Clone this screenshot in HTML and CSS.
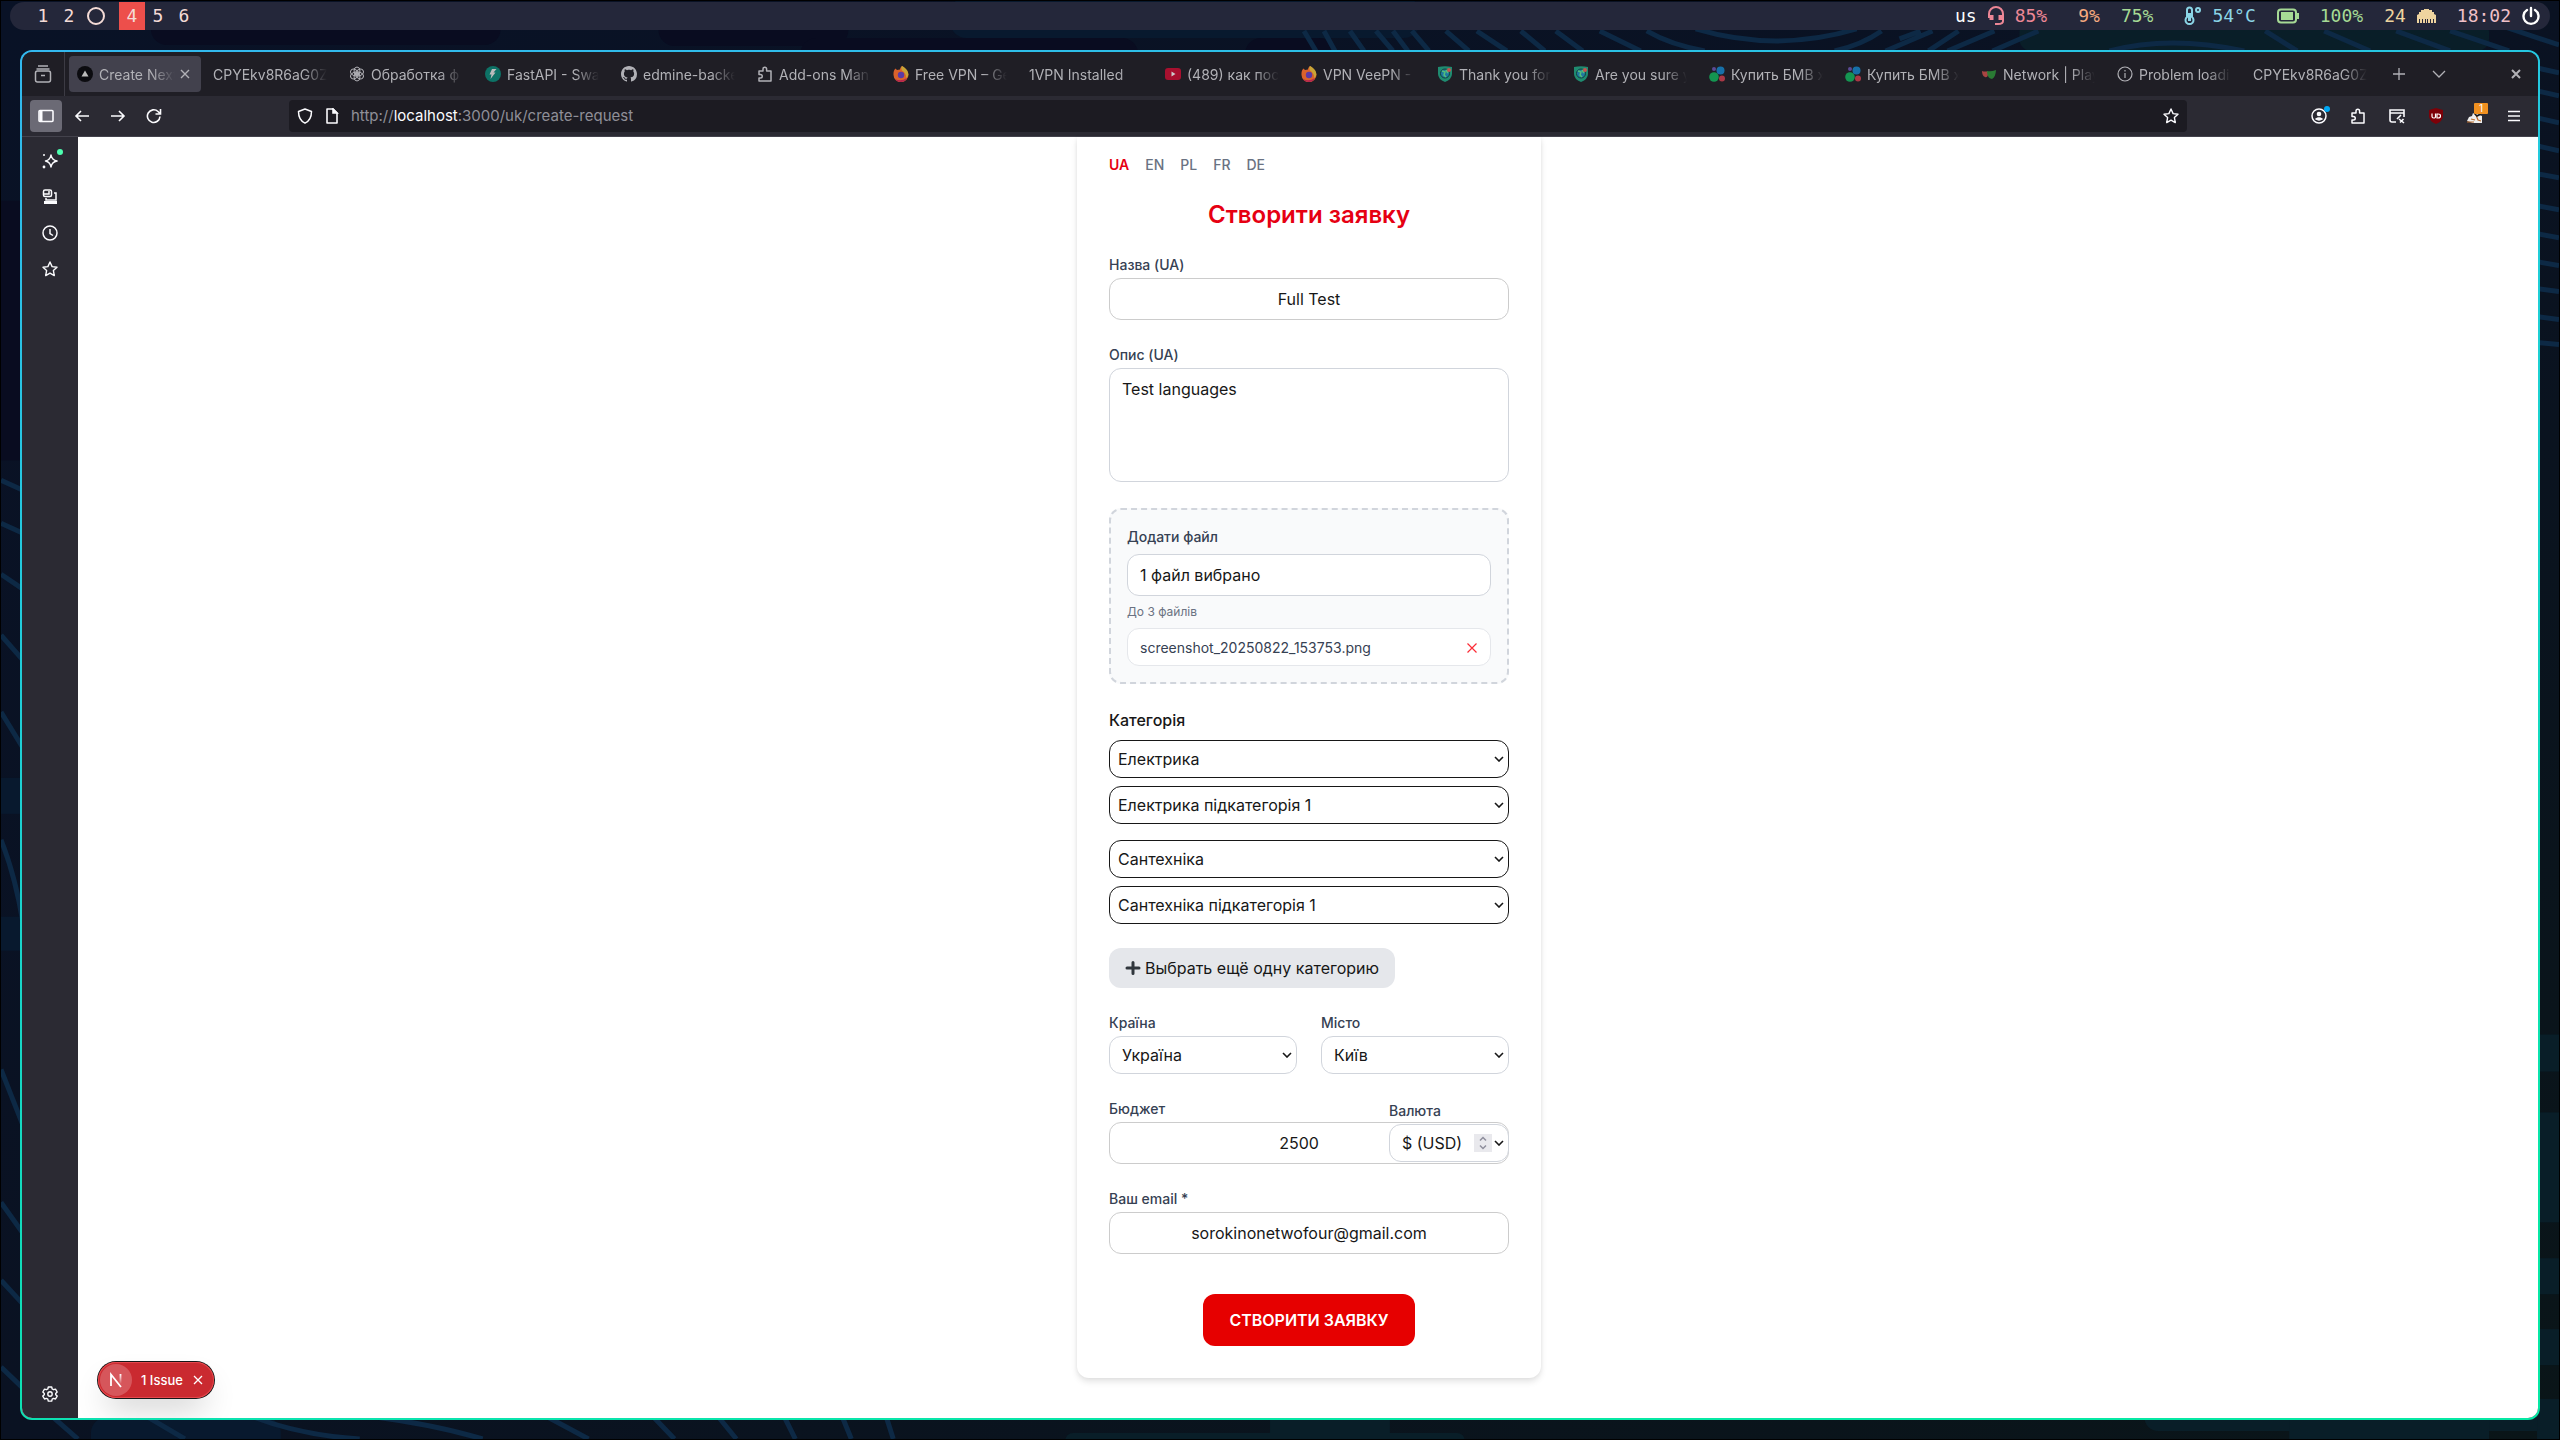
FILE: index.html
```html
<!DOCTYPE html>
<html lang="uk">
<head>
<meta charset="utf-8">
<title>Створити заявку</title>
<link rel="stylesheet" href="styles.css">
</head>
<body>
<svg class="wallpaper" viewBox="0 0 2560 1440" preserveAspectRatio="none" aria-hidden="true">
  <defs>
    <linearGradient id="night" x1="0" y1="0" x2="1" y2="1"><stop offset="0" stop-color="#091226"/><stop offset=".5" stop-color="#0a1222"/><stop offset="1" stop-color="#0a1518"/></linearGradient>
  </defs>
  <rect width="2560" height="1440" fill="url(#night)"/>
  <g fill="#090c20">
    <rect x="0" y="200" width="22" height="260"/>
    <rect x="150" y="10" width="350" height="34" rx="16"/>
    <rect x="658" y="10" width="190" height="35" rx="16"/>
    <rect x="800" y="37" width="338" height="40" rx="16"/>
    <rect x="1245" y="37" width="90" height="40" rx="16"/>
  </g>
  <g fill="#08192e">
    <rect x="950" y="-4" width="470" height="41" rx="16"/>
    <rect x="0" y="778" width="22" height="36"/>
    <rect x="0" y="917" width="22" height="34"/>
    <rect x="90" y="1418" width="190" height="40" rx="16"/>
  </g>
  <g fill="#091e28">
    <rect x="2020" y="20" width="470" height="30" rx="12"/>
    <rect x="1270" y="1400" width="120" height="50"/>
    <rect x="1065" y="1434" width="400" height="20" rx="8"/>
    <rect x="2145" y="1400" width="440" height="32" rx="14"/>
    <rect x="2290" y="1420" width="200" height="40"/>
    <rect x="2538" y="1035" width="22" height="37"/>
    <rect x="2538" y="1113" width="22" height="110"/>
    <rect x="2538" y="1259" width="22" height="36"/>
    <rect x="2538" y="1330" width="22" height="36"/>
    <rect x="2538" y="1400" width="22" height="40"/>
  </g>
  <g fill="none" stroke="#0d2945" stroke-width="5">
    <path d="M1304 30l12 20M1324 30l11 20M1350 30l14 20M1376 30l17 20M1393 30l15 20M1412 30l17 20M1446 30l23 20M1477 30l30 20M1521 30l24 20M1556 30l27 20M1600 30l41 20M1647 30q24 14 58 20M1696 28q81 24 161 0M1882 30q-20 14-47 20M1933 30l-47 20M1921 30l-21 8M1959 30l-30 20M1995 30l-47 20M2039 30l-46 20M2110 50q60-16 135 0M2266 30l32 20M2325 30l46 20M2397 30l54 20M2451 30l59 20"/>
    <path d="M2500 24l60 20M2538 67l22 5M2538 90l22 5M2538 117l22 5M2538 145l22 5M2538 173l22 4M2538 205l22 4M2538 233l22 4M2538 261l22 4M2538 288l22 3M2538 316l22 3M2538 342l22 2"/>
    <path d="M0 480l22 10M0 523l22 10M0 574l22 15M0 635l22 25M0 712l22 36M0 840q14 35 22 83M0 1070l22 56M0 1203l22 31M0 1281l22 24M0 1368l22 21"/>
    <path d="M52 1418l25 22M147 1418l37 22M253 1418q46 18 106 22M375 1418q60 8 107 22M547 1418l41 22M653 1418l21 22M718 1418l18 22M784 1418l11 22M842 1418l9 22M886 1418l7 22"/>
  </g>
</svg>

<header class="status">
  <nav class="spaces" aria-label="Workspaces">
    <button class="space">1</button><button class="space">2</button>
    <button class="space space-ring" aria-label="3"><svg width="20" height="20" viewBox="0 0 20 20" fill="none" stroke="currentColor" stroke-width="2"><circle cx="10" cy="10" r="8"/></svg></button>
    <button class="space space-on">4</button><button class="space">5</button><button class="space">6</button>
  </nav>
  <div class="meters">
    <span class="white">us</span>
    <span class="rose g1"><svg width="16" height="20" viewBox="0 0 16 20" fill="none" stroke="currentColor" stroke-width="2"><path d="M1 12V8a7 7 0 0 1 14 0v7q0 3-5 3H7"/><path d="M3.500 9v5M12.500 9v5" stroke-width="4"/></svg></span>
    <span class="rose g1">85%</span>
    <span class="peach g3">9%</span>
    <span class="green g2">75%</span>
    <span class="sky g3"><svg width="17" height="20" viewBox="0 0 17 20" fill="none" stroke="currentColor" stroke-width="2"><path d="M3 11V4a2.500 2.500 0 0 1 5 0v7a4 4 0 1 1-5 0z"/><path d="M5.500 7v8" stroke-width="3"/><circle cx="14" cy="4" r="2"/></svg></span>
    <span class="sky g1">54°C</span>
    <span class="green g2"><svg width="22" height="16" viewBox="0 0 22 16" fill="none" stroke="currentColor" stroke-width="2"><rect x="1" y="1.500" width="18" height="13" rx="3"/><path d="M5 5h10v6H5z" fill="currentColor"/><path d="M21 5v6"/></svg></span>
    <span class="green g2">100%</span>
    <span class="sand g2">24</span>
    <span class="sand g1"><svg width="19" height="16" viewBox="0 0 19 16" fill="currentColor"><path d="M0 15V7l2-1V4h2V2h3V1h5v1h3v2h2v2l2 1v8h-2v-4h-1v4h-2v-4h-1v4h-2v-4h-1v4H9v-4H8v4H6v-4H5v4H3v-4H2v4z"/></svg></span>
    <span class="pink g2">18:02</span>
    <button class="white g1 power" aria-label="Power"><svg width="18" height="20" viewBox="0 0 18 20" fill="none" stroke="currentColor" stroke-width="2.400" stroke-linecap="round"><path d="M5 4a7.500 7.500 0 1 0 8 0M9 2v8"/></svg></button>
  </div>
</header>

<svg class="defs" aria-hidden="true">
  <symbol id="firefox" viewBox="0 0 16 16"><path d="M9 0c3 2 6 5 6.500 8.500A7.500 7.500 0 0 1 .5 9C.3 6 1 4 2.500 2.500L4 4l3-.5C7 2 8 1 9 0z" fill="#d9622b"/><path d="M9 0c4 2 6.500 5 6.300 8.500-.3 2-1.300 3-2.300 3.500.5-3-1-5.500-4-7.500C8 3 8 1 9 0z" fill="#c9a436"/><path d="M2 13q6 3 12-1-2 4-6 4t-6-3z" fill="#b5254f"/><circle cx="8" cy="9" r="3.200" fill="#5b3aa5"/></symbol>
  <symbol id="shieldglobe" viewBox="0 0 16 16"><path d="M1 1q7-1.500 14 0v7q0 5-7 8-7-3-7-8z" fill="#1f8b70"/><circle cx="8" cy="7.500" r="4.500" fill="#2079a0" stroke="#12403c"/><path d="M5 5l3 1-1 3 2 2M9 4l2 3" stroke="#53c07a" stroke-width="1.500" fill="none"/><circle cx="12" cy="4" r="2" fill="#c65450"/></symbol>
  <symbol id="dots" viewBox="0 0 16 16"><circle cx="5" cy="11" r="4.800" fill="#149551"/><circle cx="11.500" cy="4.500" r="4" fill="#1670a8"/><circle cx="13" cy="12.500" r="3" fill="#a93845"/><circle cx="5" cy="3" r="2" fill="#5b4a94"/></symbol>
  <symbol id="puzzle" viewBox="0 0 16 16"><path d="M2 6.500V5h4V3a1.800 1.800 0 0 1 3.600 0v2H14v10H2v-3h1.500a1.700 1.700 0 0 0 0-3.500H2z" fill="none" stroke="currentColor" stroke-width="1.500" stroke-linejoin="round"/></symbol>
  <symbol id="star" viewBox="0 0 16 16"><path d="M8 1l2.100 4.600 4.900.6-3.600 3.400.9 5L8 12.100 3.700 14.600l.9-5L1 6.200l4.900-.6z" fill="none" stroke="currentColor" stroke-width="1.400" stroke-linejoin="round"/></symbol>
</svg>

<div class="window">
  <div class="tabbar">
    <button class="view" aria-label="Firefox View"><svg width="18" height="18" viewBox="0 0 18 18" fill="none" stroke="currentColor" stroke-width="1.500"><path d="M4 1h10M2.500 4h13"/><rect x="1.500" y="6" width="15" height="11" rx="2"/><path d="M7 10.500h4"/></svg></button>
    <div class="tabs">
      <div class="tab tab-on"><svg width="16" height="16" viewBox="0 0 16 16"><circle cx="8" cy="8" r="8" fill="#0c0c10"/><path d="M8 4.500l3.500 6h-7z" fill="#bbb"/></svg><span class="tab-title">Create Next</span><button class="tab-close" aria-label="Close tab"><svg width="10" height="10" viewBox="0 0 10 10" stroke="currentColor" stroke-width="1.400"><path d="M1 1l8 8M9 1l-8 8"/></svg></button></div>
      <div class="tab"><span class="tab-title">CPYEkv8R6aG0Z</span></div>
      <div class="tab"><svg width="16" height="16" viewBox="0 0 16 16" fill="none" stroke="currentColor" stroke-width="1"><ellipse cx="8" cy="5" rx="3" ry="4"/><ellipse cx="8" cy="5" rx="3" ry="4" transform="rotate(60 8 8)"/><ellipse cx="8" cy="5" rx="3" ry="4" transform="rotate(120 8 8)"/><ellipse cx="8" cy="5" rx="3" ry="4" transform="rotate(180 8 8)"/><ellipse cx="8" cy="5" rx="3" ry="4" transform="rotate(240 8 8)"/><ellipse cx="8" cy="5" rx="3" ry="4" transform="rotate(300 8 8)"/></svg><span class="tab-title">Обработка ф</span></div>
      <div class="tab"><svg width="16" height="16" viewBox="0 0 16 16"><circle cx="8" cy="8" r="8" fill="#0d7266"/><path d="M7 3h4.500l-3 3.500h2L5.500 13 6.500 8.500h-2z" fill="#bbb"/></svg><span class="tab-title">FastAPI - Swa</span></div>
      <div class="tab"><svg width="16" height="16" viewBox="0 0 16 16" fill="currentColor"><path d="M8 0C3.580 0 0 3.580 0 8c0 3.540 2.290 6.530 5.470 7.590.4.070.55-.17.55-.38 0-.19-.01-.82-.01-1.490-2.010.37-2.530-.49-2.690-.94-.09-.23-.48-.94-.82-1.130-.28-.15-.68-.52-.01-.53.63-.01 1.080.58 1.230.82.72 1.210 1.870.87 2.330.66.07-.52.28-.87.51-1.070-1.780-.2-3.640-.89-3.640-3.950 0-.87.31-1.590.82-2.150-.08-.2-.36-1.020.08-2.120 0 0 .67-.21 2.200.82.64-.18 1.320-.27 2-.27s1.360.09 2 .27c1.530-1.040 2.200-.82 2.200-.82.44 1.100.16 1.920.08 2.120.51.56.82 1.270.82 2.150 0 3.070-1.870 3.750-3.650 3.950.29.25.54.73.54 1.480 0 1.070-.01 1.930-.01 2.200 0 .21.15.46.55.38A8.010 8.010 0 0 0 16 8c0-4.420-3.580-8-8-8z"/></svg><span class="tab-title">edmine-backe</span></div>
      <div class="tab"><svg width="16" height="16"><use href="#puzzle"/></svg><span class="tab-title">Add-ons Man</span></div>
      <div class="tab"><svg width="16" height="16"><use href="#firefox"/></svg><span class="tab-title">Free VPN – Ge</span></div>
      <div class="tab"><span class="tab-title">1VPN Installed</span></div>
      <div class="tab"><svg width="16" height="16" viewBox="0 0 16 16"><rect y="2" width="16" height="12" rx="3" fill="#a8102f"/><path d="M6.500 5.500l4 2.500-4 2.500z" fill="#ccc"/></svg><span class="tab-title">(489) как пос</span></div>
      <div class="tab"><svg width="16" height="16"><use href="#firefox"/></svg><span class="tab-title">VPN VeePN -</span></div>
      <div class="tab"><svg width="16" height="16"><use href="#shieldglobe"/></svg><span class="tab-title">Thank you for</span></div>
      <div class="tab"><svg width="16" height="16"><use href="#shieldglobe"/></svg><span class="tab-title">Are you sure y</span></div>
      <div class="tab"><svg width="16" height="16"><use href="#dots"/></svg><span class="tab-title">Купить БМВ х</span></div>
      <div class="tab"><svg width="16" height="16"><use href="#dots"/></svg><span class="tab-title">Купить БМВ х</span></div>
      <div class="tab"><svg width="16" height="16" viewBox="0 0 16 16"><path d="M1 5q3 1 6 0v4q-1 3-3 2Q1 10 1 5z" fill="#a84442"/><path d="M6 5q4 1 9-1-.3 7-4 9Q6 12 6 5z" fill="#2a7a34"/></svg><span class="tab-title">Network | Play</span></div>
      <div class="tab"><svg width="16" height="16" viewBox="0 0 16 16" fill="none" stroke="currentColor" stroke-width="1.200"><circle cx="8" cy="8" r="7"/><path d="M8 7v5M8 4v1.500"/></svg><span class="tab-title">Problem loadi</span></div>
      <div class="tab"><span class="tab-title">CPYEkv8R6aG0Z</span></div>
    </div>
    <button class="strip" aria-label="New tab"><svg width="14" height="14" viewBox="0 0 14 14" stroke="currentColor" stroke-width="1.300"><path d="M7 1v12M1 7h12"/></svg></button>
    <button class="strip" aria-label="List tabs"><svg width="14" height="14" viewBox="0 0 14 14" fill="none" stroke="currentColor" stroke-width="1.300"><path d="M1 4l6 6 6-6"/></svg></button>
    <button class="strip strip-close" aria-label="Close window"><svg width="10" height="10" viewBox="0 0 10 10" stroke="currentColor" stroke-width="2"><path d="M1 1l8 8M9 1l-8 8"/></svg></button>
  </div>

  <div class="toolbar">
    <button class="tool tool-on" aria-label="Sidebar"><svg width="16" height="16" viewBox="0 0 16 16" fill="none" stroke="currentColor" stroke-width="1.600"><rect x="1" y="2.500" width="14" height="11" rx="1"/><path d="M3 3v10" stroke-width="3"/></svg></button>
    <button class="tool" aria-label="Back"><svg width="16" height="16" viewBox="0 0 16 16" fill="none" stroke="currentColor" stroke-width="1.600"><path d="M15 8H2M7 3L2 8l5 5"/></svg></button>
    <button class="tool" aria-label="Forward"><svg width="16" height="16" viewBox="0 0 16 16" fill="none" stroke="currentColor" stroke-width="1.600"><path d="M1 8h13M9 3l5 5-5 5"/></svg></button>
    <button class="tool" aria-label="Reload"><svg width="16" height="16" viewBox="0 0 16 16" fill="none" stroke="currentColor" stroke-width="1.600"><path d="M14 8.500A6.300 6.300 0 1 1 12 3.500l2 2M14.500 1v5H9.500"/></svg></button>
    <div class="address">
      <svg width="16" height="16" viewBox="0 0 16 16" fill="none" stroke="currentColor" stroke-width="1.500"><path d="M8 1l6.500 2.500c0 6-2 9.500-6.500 11.700C3.500 13 1.500 9.500 1.500 3.500z" stroke-linejoin="round"/></svg>
      <svg width="16" height="16" viewBox="0 0 16 16" fill="none" stroke="currentColor" stroke-width="1.600"><path d="M3 1h6l4 4v10H3z" stroke-linejoin="round"/><path d="M9 1v4h4z" fill="currentColor"/></svg>
      <p class="url">http://<b>localhost</b>:3000/uk/create-request</p>
      <svg width="16" height="16"><use href="#star"/></svg>
    </div>
    <div class="extensions">
      <button class="tool" aria-label="Account"><svg width="16" height="16" viewBox="0 0 16 16" fill="none" stroke="currentColor" stroke-width="1.500"><circle cx="8" cy="8" r="7"/><circle cx="8" cy="6" r="2.300" fill="currentColor" stroke="none"/><path d="M5 11q3-2 6 0-3 2-6 0z" fill="currentColor"/></svg><i class="dot dot-blue"></i></button>
      <button class="tool" aria-label="Extensions"><svg width="16" height="16"><use href="#puzzle"/></svg></button>
      <button class="tool" aria-label="Notes"><svg width="16" height="16" viewBox="0 0 16 16" fill="none" stroke="currentColor" stroke-width="1.600"><path d="M7 14H3a2 2 0 0 1-2-2V2h14v7M1 5h14"/><path d="M8 11l4-4M11 14.500l3.500-3.500M10 11l5 4" stroke-width="1.600"/></svg></button>
      <button class="tool" aria-label="uBlock Origin"><svg width="16" height="16" viewBox="0 0 16 16"><path d="M8 0l7 2v6q0 5-7 8-7-3-7-8V2z" fill="#7d0008"/><path d="M4 5.500v3q0 1.500 1.800 1.500t1.700-1.500v-3M9 6v4h1q2.500 0 2.500-2T10 6z" fill="none" stroke="#fff" stroke-width="1.200"/></svg></button>
      <button class="tool" aria-label="Page tools"><svg width="16" height="16" viewBox="0 0 16 16"><path d="M0 13l2-4 3-1 1-3 4 1 5 2v7H6z" fill="#eee"/><path d="M0 14h7M4 11l4 1M9 7l2 5 3 1" stroke="#b96a2a" stroke-width="1.200" fill="none"/><path d="M7 5l3 3 4-2" stroke="#181818" stroke-width="1.500" fill="none"/></svg><i class="badge">1</i></button>
      <button class="tool" aria-label="Menu"><svg width="14" height="14" viewBox="0 0 14 14" stroke="currentColor" stroke-width="1.500"><path d="M1 2.500h12M1 7h12M1 11.500h12"/></svg></button>
    </div>
  </div>

  <div class="body">
    <aside class="sidebar">
      <button class="tool" aria-label="AI chat"><svg width="16" height="16" viewBox="0 0 16 16" fill="none" stroke="currentColor" stroke-width="1.500"><path d="M9 2q.8 5 6 6-5.200 1-6 6-.8-5-5.500-6Q8.200 7 9 2z" stroke-linejoin="round"/><circle cx="2" cy="2" r="1" fill="currentColor" stroke="none"/><circle cx="2" cy="14" r="1.400" fill="currentColor" stroke="none"/></svg><i class="dot dot-green"></i></button>
      <button class="tool" aria-label="Synced tabs"><svg width="16" height="16" viewBox="0 0 16 16" fill="none" stroke="currentColor" stroke-width="1.500"><rect x="1.500" y="1" width="8" height="6.500" rx="1.500"/><path d="M7 2v3H2M12 4h2v7H4V9"/><path d="M2 13.500h13" stroke-width="3"/></svg></button>
      <button class="tool" aria-label="History"><svg width="16" height="16" viewBox="0 0 16 16" fill="none" stroke="currentColor" stroke-width="1.500"><circle cx="8" cy="8" r="7"/><path d="M8 4v4.500l3 2"/></svg></button>
      <button class="tool" aria-label="Bookmarks"><svg width="16" height="16"><use href="#star"/></svg></button>
      <button class="tool tool-last" aria-label="Settings"><svg width="16" height="16" viewBox="0 0 16 16" fill="none" stroke="currentColor" stroke-width="1.400" stroke-linejoin="round"><path d="M6.300 1h3.400l.5 2 1.300.7 2-.6 1.700 2.900L13.700 7.400v1.300l1.500 1.400-1.700 2.900-2-.6-1.300.7-.5 2H6.300l-.5-2-1.300-.7-2 .6-1.700-2.900 1.500-1.400V7.400L.8 6l1.700-2.900 2 .6L5.800 3z"/><circle cx="8" cy="8" r="2.200"/></svg></button>
    </aside>

    <main class="page">
      <form class="card">
        <nav class="langs"><a class="lang lang-on" href="#ua">UA</a><a class="lang" href="#en">EN</a><a class="lang" href="#pl">PL</a><a class="lang" href="#fr">FR</a><a class="lang" href="#de">DE</a></nav>
        <h1 class="title">Створити заявку</h1>

        <div class="field"><label class="label" for="name">Назва (UA)</label><input class="input center" id="name" type="text" value="Full Test"></div>
        <div class="field"><label class="label" for="about">Опис (UA)</label><textarea class="input area" id="about">Test languages</textarea></div>

        <div class="drop">
          <label class="label" for="files">Додати файл</label>
          <input class="input" id="files" type="text" value="1 файл вибрано" readonly>
          <p class="hint">До 3 файлів</p>
          <div class="file"><span>screenshot_20250822_153753.png</span><button class="file-x" type="button" aria-label="Видалити"><svg width="10" height="10" viewBox="0 0 10 10" stroke="currentColor" stroke-width="1.200"><path d="M.5.500l9 9M9.500.500l-9 9"/></svg></button></div>
        </div>

        <div class="cats">
          <label class="heading" for="cat1">Категорія</label>
          <div class="pair"><select class="select dark" id="cat1"><option>Електрика</option></select><select class="select dark" aria-label="Підкатегорія 1"><option>Електрика підкатегорія 1</option></select></div>
          <div class="pair"><select class="select dark" aria-label="Категорія 2"><option>Сантехніка</option></select><select class="select dark" aria-label="Підкатегорія 2"><option>Сантехніка підкатегорія 1</option></select></div>
        </div>
        <button class="more" type="button"><svg width="16" height="16" viewBox="0 0 16 16" fill="none" stroke="#31373d" stroke-width="3" stroke-linecap="round"><path d="M8 2.500v11M2 8h12"/></svg>Выбрать ещё одну категорию</button>

        <div class="row">
          <div class="field"><label class="label" for="country">Країна</label><select class="select" id="country"><option>Україна</option></select></div>
          <div class="field"><label class="label" for="city">Місто</label><select class="select" id="city"><option>Київ</option></select></div>
        </div>

        <div class="field budget">
          <label class="label" for="budget">Бюджет</label><input class="input center amount" id="budget" type="number" value="2500">
          <div class="currency"><label class="label" for="currency">Валюта</label><select class="select" id="currency"><option>$ (USD)</option></select>
            <svg class="spin" viewBox="0 0 18 18" fill="none" stroke="#8f8f9d" stroke-width="1.500"><path d="M6 6.500l3-3 3 3M6 11.500l3 3 3-3"/></svg></div>
        </div>

        <div class="field"><label class="label" for="email">Ваш email *</label><input class="input center" id="email" type="email" value="sorokinonetwofour@gmail.com"></div>
        <button class="submit" type="submit">СТВОРИТИ ЗАЯВКУ</button>
      </form>

      <div class="issue">
        <span class="issue-logo"><svg width="32" height="32" viewBox="0 0 32 32" fill="none" stroke="#fff" stroke-width="1.800"><defs><linearGradient id="fade" x1="0" y1="10" x2="0" y2="20" gradientUnits="userSpaceOnUse"><stop stop-color="#fff"/><stop offset="1" stop-color="#fff" stop-opacity="0"/></linearGradient></defs><path d="M11 22V10.500l10 12.500"/><path d="M19.600 10h1.800v10h-1.800z" fill="url(#fade)" stroke="none"/></svg></span>
        <span>1 Issue</span>
        <button class="issue-x" type="button" aria-label="Dismiss"><svg width="10" height="10" viewBox="0 0 10 10" stroke="currentColor" stroke-width="1.300"><path d="M1 1l8 8M9 1l-8 8"/></svg></button>
      </div>
    </main>
  </div>
</div>
</body>
</html>
```
FILE: styles.css
```css
* { box-sizing: border-box; }
body {
  margin: 0;
  min-height: 100vh;
  display: flex;
  flex-direction: column;
  position: relative;
  font-family: Inter, "Liberation Sans", sans-serif;
  background: #0a1222;
}
button { border: 0; padding: 0; margin: 0; background: none; color: inherit; font: inherit; }
svg { display: block; flex: none; }
p, h1 { margin: 0; }
.defs { position: absolute; width: 0; height: 0; }
.wallpaper { position: absolute; top: 0; left: 0; width: 100%; height: 100%; z-index: -1; border: 1px solid #000; }

/* desktop status bar */
.status {
  display: flex;
  justify-content: space-between;
  margin: 2px 10px 0;
  height: 28px;
  padding: 0 10px 0 20px;
  border-radius: 14px;
  background: #24273a;
  font-family: "DejaVu Sans Mono", monospace;
  font-size: 18px;
  line-height: 28px;
}
.spaces, .meters { display: flex; align-items: center; }
.space { width: 26px; height: 28px; text-align: center; color: #f4dbd6; }
.space-ring { width: 37px; padding-left: 4px; }
.space-on { background: #ed4f4b; }
.g1 { margin-left: 11px; }
.g2 { margin-left: 21px; }
.g3 { margin-left: 31px; }
.white { color: #fff; }
.rose { color: #ed8796; }
.peach { color: #f5a97f; }
.green { color: #a6da95; }
.sky { color: #8bd5e6; }
.sand { color: #eed49f; }
.pink { color: #f0c0c8; }

/* browser window */
.window {
  flex: 1;
  display: flex;
  flex-direction: column;
  margin: 20px;
  border: 2px solid transparent;
  border-radius: 12px;
  background: linear-gradient(#2b2a33, #2b2a33) padding-box, linear-gradient(170deg, #33b8ee, #22cbdd 30%, #06e8a4 90%) border-box;
  overflow: hidden;
  color: #fbfbfe;
}
.tabbar { display: flex; height: 44px; background: #1f1e25; color: #b1b1b6; font-size: 14px; align-items: center; }
.view { width: 43px; height: 44px; display: grid; place-items: center; border-right: 1px solid #3c3b44; }
.tabs { display: flex; margin-left: 2px; }
.tab {
  display: flex;
  align-items: center;
  gap: 6px;
  width: 132px;
  height: 36px;
  margin: 0 2px;
  padding: 0 8px;
  border-radius: 4px;
}
.tab-on { background: #42414d; }
.tab-title { flex: 1; overflow: hidden; white-space: nowrap; mask-image: linear-gradient(to left, transparent 2px, #000 26px); }
.tab-close { width: 16px; height: 16px; display: grid; place-items: center; margin: 0 0 0 -6px; }
.strip { width: 40px; height: 36px; display: grid; place-items: center; }
.strip-close { margin-left: auto; margin-right: 2px; }

.toolbar { display: flex; gap: 4px; height: 41px; padding: 4px 8px; border-bottom: 1px solid #43424c; }
.tool { position: relative; width: 32px; height: 32px; display: grid; place-items: center; border-radius: 4px; }
.tool-on { background: #6b6a75; }
.address {
  flex: 1;
  display: flex;
  align-items: center;
  gap: 11px;
  margin: 0 112px 0 115px;
  padding: 0 8px;
  height: 32px;
  border-radius: 4px;
  background: #1c1b22;
}
.url { flex: 1; font-size: 15px; line-height: 20px; color: #8f8f98; }
.url b { font-weight: 400; color: #fbfbfe; }
.extensions { display: flex; gap: 7px; }
.dot { position: absolute; width: 6px; height: 6px; border-radius: 50%; }
.dot-blue { top: 6px; right: 5px; background: #00a8f5; }
.dot-green { top: 4px; right: 3px; background: #4dffb0; }
.badge { position: absolute; top: 3px; right: 3px; width: 14px; height: 11px; border-radius: 1px; background: #f09020; font-size: 10px; line-height: 11px; font-style: normal; text-align: center; }

.body { flex: 1; display: flex; background: #fff; }
.sidebar { display: flex; flex-direction: column; align-items: center; gap: 4px; width: 56px; padding: 8px 0; background: #2b2a33; }
.tool-last { margin-top: auto; }

/* request form */
.page { flex: 1; position: relative; padding: 0 0 40px 2px; color: #171717; }
.card {
  display: flex;
  flex-direction: column;
  gap: 24px;
  max-width: 464px;
  margin: 0 auto;
  padding: 18px 32px 32px;
  border-radius: 0 0 12px 12px;
  box-shadow: 0 4px 6px rgba(0, 0, 0, .1), 0 0 4px rgba(0, 0, 0, .06);
  font-size: 16px;
  line-height: 24px;
}
.langs { display: flex; gap: 16px; font-size: 14px; line-height: 20px; font-weight: 500; }
.lang { color: #6a7282; text-decoration: none; }
.lang-on { color: #e60012; font-weight: 600; }
.title { font-size: 24px; line-height: 32px; font-weight: 600; text-align: center; color: #e60012; }
.field { display: flex; flex-direction: column; gap: 3px; flex: 1; }
.title + .field { margin-top: -1px; }
.label { padding-top: 1px; font-size: 14px; line-height: 20px; font-weight: 500; color: #364153; }
.input, .select {
  width: 100%;
  margin: 0;
  padding: 8px 12px;
  border: 1px solid #d1d5dc;
  border-radius: 12px;
  background: #fff;
  color: #171717;
  font: inherit;
}
.input { height: 42px; }
.center { text-align: center; border-color: #ccc; }
.area { height: 114px; resize: none; display: block; margin-bottom: 2px; }
.select {
  appearance: none;
  height: 38px;
  padding: 6px 24px 6px 12px;
  background: #fff url("data:image/svg+xml,%3Csvg xmlns='http://www.w3.org/2000/svg' width='10' height='6' fill='none' stroke='%23171717' stroke-width='1.600'%3E%3Cpath d='M1 1l4 4 4-4'/%3E%3C/svg%3E") no-repeat right 4px center;
}
.dark { border-color: #171717; padding-left: 8px; }
.drop { display: flex; flex-direction: column; gap: 7px; padding: 16px; border: 2px dashed #d1d5dc; border-radius: 12px; background: #f9fafb; }
.hint { font-size: 12px; line-height: 18px; color: #6a7282; }
.file { display: flex; align-items: center; justify-content: space-between; padding: 9px 12px 7px; border: 1px solid #e5e7eb; border-radius: 12px; background: #fff; font-size: 14px; line-height: 20px; height: 38px; color: #364153; }
.file-x { width: 12px; height: 20px; display: grid; place-items: center; color: #fb2c36; }
.heading { display: block; font-weight: 500; margin-bottom: 8px; }
.pair { display: flex; flex-direction: column; gap: 8px; }
.pair + .pair { margin-top: 16px; }
.more { align-self: flex-start; display: flex; align-items: center; gap: 4px; height: 40px; padding: 8px 16px; border-radius: 12px; background: #e5e7eb; }
.row { display: flex; gap: 24px; }
.budget { position: relative; }
.amount { padding-right: 32px; appearance: textfield; }
.amount::-webkit-inner-spin-button { appearance: none; }
.currency { position: absolute; right: 0; bottom: 2px; width: 120px; display: flex; flex-direction: column; gap: 3px; }
.spin { position: absolute; right: 17px; bottom: 10px; width: 18px; height: 18px; background: #e9e9ed; pointer-events: none; }
.submit { align-self: center; margin-top: 16px; height: 52px; padding: 0 26px; border-radius: 12px; background: #e60000; color: #fff; font-weight: 600; }

/* dev overlay badge */
.issue {
  position: absolute;
  left: 20px;
  bottom: 20px;
  display: flex;
  align-items: center;
  gap: 9px;
  height: 36px;
  padding: 0 10px 0 2px;
  border-radius: 18px;
  background: #ca2a30;
  color: #fff;
  font-size: 13px;
  font-weight: 500;
  box-shadow: inset 0 0 0 1px #e5484d, 0 0 0 1px #171717, 0 16px 32px -8px rgba(0, 0, 0, .24);
}
.issue-logo { width: 32px; height: 32px; border-radius: 50%; background: #d6565b; }
.issue-x { display: grid; place-items: center; width: 12px; height: 20px; }
```
